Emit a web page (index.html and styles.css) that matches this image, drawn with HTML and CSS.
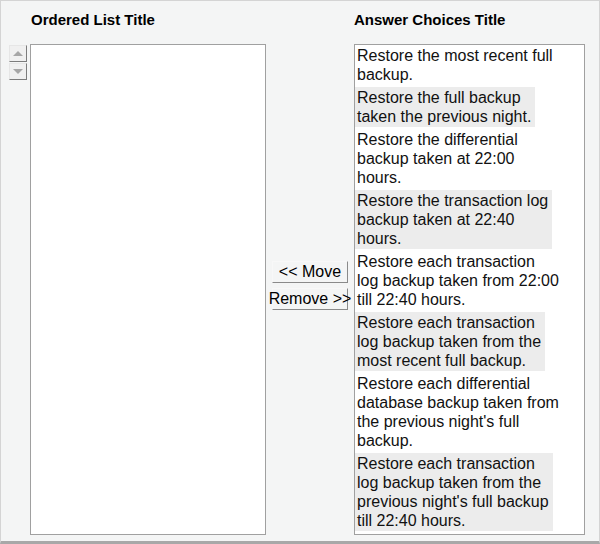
FILE: index.html
```html
<!DOCTYPE html>
<html lang="en">
<head>
    <meta charset="UTF-8">
    <title>Ordered List</title>
    <link rel="stylesheet" href="styles.css">
</head>
<body>
    <div class="frame">
        <div class="col-left">
            <h2 class="title">Ordered List Title</h2>
            <div class="left-body">
                <div class="arrows">
                    <button class="arrow-btn"><span class="tri-up"></span></button>
                    <button class="arrow-btn"><span class="tri-down"></span></button>
                </div>
                <div class="list-box" id="ordered-list"></div>
            </div>
        </div>

        <div class="col-mid">
            <button class="move-btn">&lt;&lt; Move</button>
            <button class="move-btn">Remove &gt;&gt;</button>
        </div>

        <div class="col-right">
            <h2 class="title">Answer Choices Title</h2>
            <div class="list-box choices">
                <div class="choice">Restore the most recent full<br>backup.</div>
                <div class="choice alt">Restore the full backup<br>taken the previous night.</div>
                <div class="choice">Restore the differential<br>backup taken at 22:00<br>hours.</div>
                <div class="choice alt">Restore the transaction log<br>backup taken at 22:40<br>hours.</div>
                <div class="choice">Restore each transaction<br>log backup taken from 22:00<br>till 22:40 hours.</div>
                <div class="choice alt">Restore each transaction<br>log backup taken from the<br>most recent full backup.</div>
                <div class="choice">Restore each differential<br>database backup taken from<br>the previous night's full<br>backup.</div>
                <div class="choice alt">Restore each transaction<br>log backup taken from the<br>previous night's full backup<br>till 22:40 hours.</div>
            </div>
        </div>
    </div>
</body>
</html>
```

FILE: styles.css
```css
body {
    margin: 0;
    padding: 0;
    background: #ffffff;
    font-family: 'Liberation Sans', Arial, sans-serif;
}

.frame {
    width: 600px;
    height: 544px;
    box-sizing: border-box;
    display: flex;
    padding: 10px 0 0 8px;
    background: #f4f5f5;
    border-top: 1px solid #d4d4d4;
    border-left: 1px solid #d4d4d4;
    border-right: 1px solid #d4d4d4;
    border-bottom: 3px solid #a8a8a8;
}

.title {
    margin: 0 0 16px 0;
    font-size: 15px;
    line-height: 17px;
    font-weight: bold;
    color: #000;
}

.col-left .title {
    padding-left: 22px;
}

.left-body {
    display: flex;
    gap: 3px;
}

.arrows {
    display: flex;
    flex-direction: column;
    padding-top: 1px;
}

.arrow-btn {
    width: 18px;
    height: 17px;
    padding: 0;
    margin: 0 0 1px 0;
    background: #f0f0f0;
    border: 1px solid;
    border-color: #e6e6e6 #7c7c7c #7c7c7c #e6e6e6;
    display: flex;
    align-items: center;
    justify-content: center;
}

.tri-up, .tri-down {
    width: 0;
    height: 0;
    border-left: 5px solid transparent;
    border-right: 5px solid transparent;
}

.tri-up {
    border-bottom: 5px solid #a6a6a6;
}

.tri-down {
    border-top: 5px solid #a6a6a6;
}

.list-box {
    height: 491px;
    box-sizing: border-box;
    background: #ffffff;
    border: 1px solid #a0a0a0;
}

#ordered-list {
    width: 236px;
}

.col-mid {
    width: 88px;
    display: flex;
    flex-direction: column;
    align-items: center;
    padding-top: 250px;
    gap: 5px;
}

.move-btn {
    width: 76px;
    height: 22px;
    padding: 0;
    margin: 0;
    font-family: 'Liberation Sans', Arial, sans-serif;
    font-size: 16px;
    white-space: nowrap;
    overflow: visible;
    display: flex;
    justify-content: center;
    align-items: center;
    color: #000;
    background: #f4f5f5;
    border: 1px solid;
    border-color: #f8f8f8 #8a8a8a #8a8a8a #f8f8f8;
}

.choices {
    width: 231px;
    padding: 0;
}

.choice {
    width: fit-content;
    box-sizing: border-box;
    padding: 1px 4px 1px 2px;
    margin-bottom: 2px;
    font-size: 16px;
    line-height: 19px;
    white-space: nowrap;
    color: #111;
}

.choice.alt {
    background: #ececec;
}
```
